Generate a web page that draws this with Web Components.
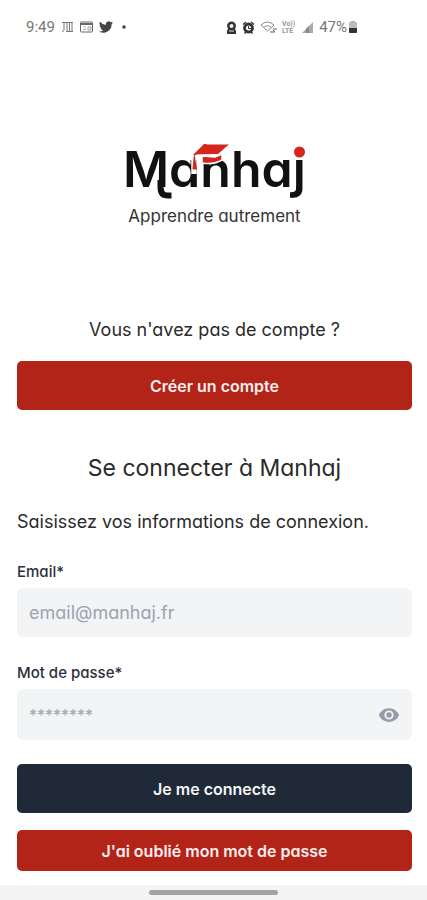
<!DOCTYPE html>
<html lang="fr">
<head>
<meta charset="utf-8">
<meta name="viewport" content="width=device-width, initial-scale=1">
<title>Manhaj</title>
<style>
body { margin: 0; background: #fff; color: #2a2a2a; font-family: Inter, "Open Sans", sans-serif; font-feature-settings: "cv11"; }
</style>
</head>
<body>
<login-page></login-page>
<script>
const define = (name, html, setup) => customElements.define(name, class extends HTMLElement {
  constructor() {
    super();
    const t = document.createElement('template');
    t.innerHTML = html;
    this.attachShadow({ mode: 'open' }).append(t.content.cloneNode(true));
  }
  connectedCallback() { if (setup) setup(this, this.shadowRoot); }
});

define('status-bar', `
<style>
:host { display: flex; justify-content: space-between; align-items: center; height: 54px; padding: 0 69px 0 26px; box-sizing: border-box; color: #777; font: 15px/20px Roboto, sans-serif; }
div { display: flex; align-items: center; gap: 6px; }
.right { gap: 5px; }
.charge { display: flex; align-items: center; gap: 1px; }
svg { display: block; }
</style>
<div>
  <span>9:49</span>
  <svg width="13" height="12" viewBox="0 0 13 12" fill="none" stroke="#777"><path d="M1 1.500h4M3 1.500v7q0 2-2 2M5 1.500h7M6 2v8M8.500 2v8M11 2v8M5 10.500h7"/></svg>
  <svg width="13" height="12" viewBox="0 0 13 12" fill="none" stroke="#666"><rect x=".5" y="1" width="12" height="10" rx="1"/><path d="M1 3h11" stroke-width="2"/><path d="M3 6h3M3 8.500h3" stroke="#aaa"/><path d="M8 6h3v3H8z" stroke="#999"/></svg>
  <svg width="14" height="14" viewBox="0 0 24 24" fill="#444"><path d="M24 4.600a10 10 0 0 1-2.800.8 5 5 0 0 0 2.100-2.700 10 10 0 0 1-3.100 1.200 4.900 4.900 0 0 0-8.400 4.500A14 14 0 0 1 1.700 3.200a4.900 4.900 0 0 0 1.500 6.500A5 5 0 0 1 1 9.100a4.900 4.900 0 0 0 3.900 4.900 5 5 0 0 1-2.200.1 4.900 4.900 0 0 0 4.600 3.400A9.900 9.900 0 0 1 0 19.500 14 14 0 0 0 21.500 7.100 10 10 0 0 0 24 4.600z"/></svg>
  <svg width="7" height="4" viewBox="0 0 7 4"><circle cx="5" cy="2" r="1.800" fill="#444"/></svg>
</div>
<div class="right">
  <svg width="11" height="13" viewBox="0 0 11 13"><path d="M1 5a4.500 4.500 0 0 1 9 0l-1 3 1 2v3H1v-3l1-2z" fill="#333"/><circle cx="5.500" cy="5" r="2" fill="#eee"/><path d="M3 10h5" stroke="#ddd"/></svg>
  <svg width="13" height="13" viewBox="0 0 13 13" fill="none" stroke="#333"><circle cx="6.500" cy="7" r="4" stroke-width="2.800"/><path d="M1 3.500l3-2.500M12 3.500L9 1M2.500 12.500l1.500-1.500M10.500 12.500L9 11" stroke-width="1.500"/><path d="M6.500 5v2.500H9"/></svg>
  <svg width="17" height="13" viewBox="0 0 17 13" fill="none" stroke="#888"><path d="M1 4q6.500-6 13 0M3.500 6.500q4-3.500 8 0M1 4l6.500 6L14 4"/><path d="M10 11h5l-2-2M17 8h-4" stroke="#666"/></svg>
  <svg width="14" height="14" viewBox="0 0 14 14" fill="#999" font-family="Roboto,sans-serif" font-weight="700"><text x="0" y="6" font-size="7">Vo))</text><text x="0" y="13" font-size="7">LTE</text></svg>
  <svg width="13" height="13" viewBox="0 0 13 13"><path d="M1 12L12 1v11z" fill="#aaa"/><path d="M5 8l3-3v7H5z" fill="#888"/></svg>
  <span class="charge"><span>47%</span>
  <svg width="10" height="13" viewBox="0 0 10 13"><rect x="3" width="4" height="2" fill="#aaa"/><rect x="1" y="1" width="8" height="11" rx="1" fill="#bbb"/><path d="M1 7h8v4q0 1-1 1H2q-1 0-1-1z" fill="#333"/></svg></span>
</div>`);

define('brand-logo', `
<style>
:host { display: flex; flex-direction: column; align-items: center; }
svg { display: block; overflow: visible; }
p { margin: 2px 0 0; font-size: 17px; line-height: 24px; color: #333; }
</style>
<svg width="180" height="60" viewBox="0 0 180 60" role="img" aria-label="Manhaj">
  <g font-size="50" font-weight="600" fill="#111"><text x="-2" y="45">Manhaj</text></g>
  <path d="M35.500 38v7q0 8.500 7 8.500h4" fill="none" stroke="#111" stroke-width="6"/>
  <path d="M174 44v2q0 7-6 7h-3" fill="none" stroke="#111" stroke-width="5.500"/>
  <path d="M68 13L79 2h26L93 12.500z" fill="#d5261d" stroke="#fff"/>
  <path d="M77 14l13 1 7-3v6q-8 5-20 3z" fill="#d5261d" stroke="#fff" stroke-width="1.500"/>
  <path d="M69 13v19" stroke="#fff" stroke-width="5.500"/><path d="M69.500 12L68 27h4" fill="#d5261d" stroke="#d5261d"/><path d="M68 13l11-11h3L71 13z" fill="#d5261d"/>
  <circle cx="174.500" cy="10" r="5.500" fill="#d5261d"/>
</svg>
<p>Apprendre autrement</p>`);

define('app-button', `
<style>
:host { display: block; }
button { display: block; width: 100%; min-height: 49px; padding: 8px 16px; border: 0; border-radius: 5px; background: #b22318; color: #fbeeee; font: inherit; font-size: 16px; line-height: 24px; font-weight: 600; font-feature-settings: inherit; }
:host([tone="dark"]) button { background: #1f2937; color: #f3f4f6; }
:host([size="small"]) button { min-height: 41px; }
</style>
<button type="button"><slot></slot></button>`);

define('text-field', `
<style>
:host { display: block; }
label { display: block; font-size: 15px; line-height: 20px; font-weight: 500; color: #2b3040; margin-bottom: 6px; }
.box { display: flex; align-items: center; min-height: 49px; padding: 0 12px; background: #f3f4f6; border-radius: 6px; box-sizing: border-box; }
:host([type="password"]) .box { min-height: 51px; }
input { flex: 1; min-width: 0; padding: 0; border: 0; outline: 0; background: none; font: inherit; font-size: 18px; line-height: 24px; color: #222; font-feature-settings: inherit; }
:host([type="password"]) input { font-size: 16px; }
input::placeholder { color: #9ca3af; opacity: 1; }
button { display: none; padding: 0; border: 0; background: none; }
:host([type="password"]) button { display: block; }
svg { display: block; }
</style>
<label for="field"></label>
<div class="box"><input id="field">
<button type="button" aria-label="Afficher le mot de passe"><svg width="22" height="22" viewBox="0 0 24 24" fill="#959ba8"><path d="M12 4.500C7 4.500 2.700 7.600 1 12c1.700 4.400 6 7.500 11 7.500s9.300-3.100 11-7.500c-1.700-4.400-6-7.500-11-7.500zM12 17a5 5 0 1 1 0-10 5 5 0 0 1 0 10zm0-8a3 3 0 1 0 0 6 3 3 0 0 0 0-6z"/></svg></button></div>`,
(el, root) => {
  root.querySelector('label').textContent = el.getAttribute('label');
  const input = root.querySelector('input');
  input.type = el.getAttribute('type');
  input.placeholder = el.getAttribute('placeholder');
});

define('home-indicator', `
<style>
:host { display: flex; justify-content: center; align-items: center; height: 15px; background: #f4f4f4; }
span { width: 30%; height: 5px; border-radius: 3px; background: #a3a3a3; }
</style><span></span>`);

define('login-page', `
<style>
:host { display: flex; flex-direction: column; min-height: 100vh; }
main { flex: 1; padding: 88px 15px 13px 17px; }
p, h1 { margin: 0; font-weight: 400; }
.ask { margin-top: 90px; padding-bottom: 19px; font-size: 18px; line-height: 24px; text-align: center; }
h1 { margin-top: 42px; font-size: 23px; line-height: 32px; text-align: center; }
.intro { margin-top: 26px; font-size: 18px; line-height: 24px; }
.email { margin-top: 28px; }
.password { margin-top: 26px; }
.login { margin-top: 24px; }
.forgot { margin-top: 17px; }
</style>
<status-bar></status-bar>
<main>
  <brand-logo></brand-logo>
  <p class="ask">Vous n'avez pas de compte ?</p>
  <app-button>Créer un compte</app-button>
  <h1>Se connecter à Manhaj</h1>
  <p class="intro">Saisissez vos informations de connexion.</p>
  <text-field class="email" label="Email*" type="email" placeholder="email@manhaj.fr"></text-field>
  <text-field class="password" label="Mot de passe*" type="password" placeholder="********"></text-field>
  <app-button class="login" tone="dark">Je me connecte</app-button>
  <app-button class="forgot" size="small">J'ai oublié mon mot de passe</app-button>
</main>
<home-indicator></home-indicator>`);
</script>
</body>
</html>
